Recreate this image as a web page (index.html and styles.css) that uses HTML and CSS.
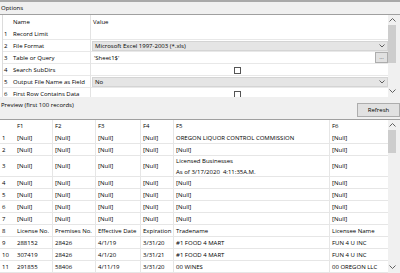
FILE: index.html
```html
<!DOCTYPE html>
<html lang="en">
<head>
    <meta charset="UTF-8">
    <title>Input Data - Configuration</title>
    <link rel="stylesheet" href="styles.css">
</head>
<body>
    <div class="topline"></div>
    <div class="pane-label">Options</div>

    <div class="options">
        <div class="grid">
            <div class="opt-row head">
                <span class="num"></span><span class="name">Name</span><span class="val">Value</span>
            </div>
            <div class="opt-row first">
                <span class="num">1</span><span class="name">Record Limit</span><span class="val"></span>
            </div>
            <div class="opt-row">
                <span class="num">2</span><span class="name">File Format</span>
                <span class="val"><span class="combo">Microsoft Excel 1997-2003 (*.xls)
                    <svg class="chev" width="6" height="4" viewBox="0 0 6 4"><polyline points="0.5,0.5 3,3 5.5,0.5" fill="none" stroke="#606060" stroke-width="1"/></svg>
                </span></span>
            </div>
            <div class="opt-row">
                <span class="num">3</span><span class="name">Table or Query</span>
                <span class="val"><span class="textbox">'Sheet1$'</span><span class="dots">...</span></span>
            </div>
            <div class="opt-row">
                <span class="num">4</span><span class="name">Search SubDirs</span>
                <span class="val center"><span class="check"></span></span>
            </div>
            <div class="opt-row">
                <span class="num">5</span><span class="name">Output File Name as Field</span>
                <span class="val"><span class="combo">No
                    <svg class="chev" width="6" height="4" viewBox="0 0 6 4"><polyline points="0.5,0.5 3,3 5.5,0.5" fill="none" stroke="#606060" stroke-width="1"/></svg>
                </span></span>
            </div>
            <div class="opt-row">
                <span class="num">6</span><span class="name">First Row Contains Data</span>
                <span class="val center"><span class="check"></span></span>
            </div>
        </div>
        <div class="scrollbar opts-scroll">
            <svg class="arrow" width="7" height="4" viewBox="0 0 7 4"><polyline points="0.5,3.5 3.5,0.5 6.5,3.5" fill="none" stroke="#606060" stroke-width="1"/></svg>
            <div class="thumb"></div>
            <div class="track"></div>
            <svg class="arrow" width="7" height="4" viewBox="0 0 7 4"><polyline points="0.5,0.5 3.5,3.5 6.5,0.5" fill="none" stroke="#606060" stroke-width="1"/></svg>
        </div>
    </div>

    <div class="preview-bar">
        <span class="pane-title">Preview (first 100 records)</span>
        <button class="refresh">Refresh</button>
    </div>

    <div class="preview">
        <div class="grid">
            <div class="row head">
                <span class="num"></span><span>F1</span><span>F2</span><span>F3</span><span>F4</span><span>F5</span><span>F6</span>
            </div>
            <div class="row">
                <span class="num">1</span><span>[Null]</span><span>[Null]</span><span>[Null]</span><span>[Null]</span><span>OREGON LIQUOR CONTROL COMMISSION</span><span>[Null]</span>
            </div>
            <div class="row">
                <span class="num">2</span><span>[Null]</span><span>[Null]</span><span>[Null]</span><span>[Null]</span><span>[Null]</span><span>[Null]</span>
            </div>
            <div class="row tall">
                <span class="num">3</span><span>[Null]</span><span>[Null]</span><span>[Null]</span><span>[Null]</span><span class="multi">Licensed Businesses<br>As of 3/17/2020&nbsp;&nbsp;4:11:35A.M.</span><span>[Null]</span>
            </div>
            <div class="row">
                <span class="num">4</span><span>[Null]</span><span>[Null]</span><span>[Null]</span><span>[Null]</span><span>[Null]</span><span>[Null]</span>
            </div>
            <div class="row">
                <span class="num">5</span><span>[Null]</span><span>[Null]</span><span>[Null]</span><span>[Null]</span><span>[Null]</span><span>[Null]</span>
            </div>
            <div class="row">
                <span class="num">6</span><span>[Null]</span><span>[Null]</span><span>[Null]</span><span>[Null]</span><span>[Null]</span><span>[Null]</span>
            </div>
            <div class="row">
                <span class="num">7</span><span>[Null]</span><span>[Null]</span><span>[Null]</span><span>[Null]</span><span>[Null]</span><span>[Null]</span>
            </div>
            <div class="row">
                <span class="num">8</span><span>License No.</span><span>Premises No.</span><span>Effective Date</span><span>Expiration</span><span>Tradename</span><span>Licensee Name</span>
            </div>
            <div class="row">
                <span class="num">9</span><span>288152</span><span>28426</span><span>4/1/19</span><span>3/31/20</span><span>#1 FOOD 4 MART</span><span>FUN 4 U INC</span>
            </div>
            <div class="row">
                <span class="num">10</span><span>307419</span><span>28426</span><span>4/1/20</span><span>3/31/21</span><span>#1 FOOD 4 MART</span><span>FUN 4 U INC</span>
            </div>
            <div class="row">
                <span class="num">11</span><span>291855</span><span>58406</span><span>4/11/19</span><span>3/31/20</span><span>00 WINES</span><span>00 OREGON LLC</span>
            </div>
        </div>
        <div class="scrollbar prev-scroll">
            <svg class="arrow" width="7" height="4" viewBox="0 0 7 4"><polyline points="0.5,3.5 3.5,0.5 6.5,3.5" fill="none" stroke="#606060" stroke-width="1"/></svg>
            <div class="thumb"></div>
            <div class="track"></div>
            <svg class="arrow" width="7" height="4" viewBox="0 0 7 4"><polyline points="0.5,0.5 3.5,3.5 6.5,0.5" fill="none" stroke="#606060" stroke-width="1"/></svg>
        </div>
    </div>
</body>
</html>
```

FILE: styles.css
```css
* {
    box-sizing: border-box;
}

body {
    margin: 0;
    width: 400px;
    height: 273px;
    overflow: hidden;
    background-color: #f0f0f0;
    font-family: "Open Sans", "Noto Sans", sans-serif;
    font-size: 6px;
    color: #000;
}

.topline {
    height: 2px;
    background-color: #a9a9a9;
}

.pane-label {
    height: 12px;
    padding: 2px 0 0 1px;
    line-height: 9px;
}

/* options grid */

.options {
    display: flex;
    height: 83px;
    border-top: 1px solid #a0a0a0;
    background: white;
    overflow: hidden;
}

.options .grid {
    flex: 1;
    border-left: 1px solid #dcdcdc;
    margin-left: 2px;
}

.opt-row {
    display: grid;
    grid-template-columns: 8px 80px 1fr;
    height: 12px;
    border-bottom: 1px solid #e8e8e8;
    line-height: 12px;
}

.opt-row.head {
    height: 13px;
    border-bottom: none;
    line-height: 15px;
}

.opt-row .num {
    padding-left: 1px;
}

.opt-row .name {
    padding-left: 2px;
    border-right: 1px solid #e3e3e3;
    white-space: nowrap;
    overflow: hidden;
}

.opt-row .val {
    display: flex;
    padding: 1px 0 0 1px;
    white-space: nowrap;
}

.opt-row.head .val {
    padding: 0 0 0 2px;
}

.opt-row .val.center {
    justify-content: center;
    align-items: center;
    padding: 0 4px 0 0;
}

.combo {
    flex: 1;
    display: flex;
    justify-content: space-between;
    align-items: center;
    height: 10px;
    padding: 0 2px 0 2px;
    background-color: #e5e5e5;
    border: 1px solid #d4d4d4;
    line-height: 9px;
}

.textbox {
    flex: 1;
    height: 10px;
    padding-left: 2px;
    line-height: 10px;
}

.dots {
    width: 13px;
    height: 11px;
    margin-top: -1px;
    border: 1px solid #adadad;
    background-color: #e1e1e1;
    text-align: center;
    line-height: 8px;
    color: #555;
}

.check {
    width: 7px;
    height: 7px;
    margin-top: 1px;
    border: 1px solid #555;
    background: white;
}

/* scrollbars */

.scrollbar {
    width: 12px;
    display: flex;
    flex-direction: column;
    align-items: flex-start;
    background-color: #f0f0f0;
}

.scrollbar .arrow {
    margin: 3px 0 0 1px;
}

.scrollbar .thumb {
    width: 8px;
    background-color: #cdcdcd;
}

.scrollbar .track {
    flex: 1;
}

.opts-scroll .thumb {
    height: 38px;
    margin-top: 3px;
}

.opts-scroll .arrow:last-child {
    margin: 0 0 4px 1px;
}

.prev-scroll .thumb {
    height: 23px;
    margin-top: 3px;
}

.prev-scroll .arrow:last-child {
    margin: 0 0 4px 1px;
}

/* preview */

.preview-bar {
    display: flex;
    justify-content: space-between;
    align-items: flex-start;
    height: 22px;
}

.pane-title {
    padding: 4px 0 0 1px;
    line-height: 9px;
}

.refresh {
    width: 43px;
    height: 14px;
    margin-top: 6px;
    padding: 0;
    border: 1px solid #adadad;
    background-color: #e1e1e1;
    font-family: inherit;
    font-size: 6px;
    color: #000;
    line-height: 12px;
}

.preview {
    display: flex;
    height: 154px;
    border-top: 1px solid #a0a0a0;
    background: white;
}

.preview .grid {
    flex: 1;
}

.row {
    display: grid;
    grid-template-columns: 15px 38px 43px 45px 33px 156px 58px;
    height: 12px;
    border-bottom: 1px solid #e6e6e6;
}

.row.head {
    border-bottom: none;
}

.row.tall {
    height: 21px;
}

.row span {
    display: flex;
    align-items: center;
    padding-left: 2px;
    border-right: 1px solid #e6e6e6;
    white-space: nowrap;
    overflow: hidden;
}

.row span.num {
    border-right: none;
}

.row span:last-child {
    border-right: none;
}

.row span.multi {
    display: block;
    padding-top: 0;
    line-height: 11px;
}
```
